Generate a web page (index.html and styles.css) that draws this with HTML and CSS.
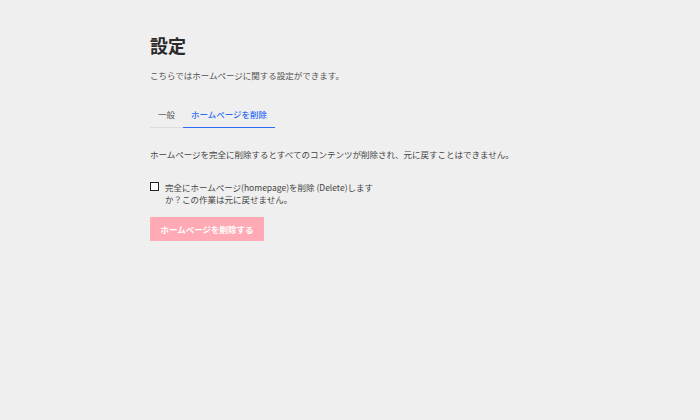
FILE: index.html
```html
<!DOCTYPE html>
<html lang="ja">
<head>
<meta charset="UTF-8" />
<title>設定</title>
<link rel="stylesheet" href="styles.css">
</head>
<body>
  <main class="settings">
    <h1>設定</h1>
    <p class="lead">こちらではホームページに関する設定ができます。</p>

    <ul class="tabs">
      <li class="tab">一般</li>
      <li class="tab active">ホームページを削除</li>
    </ul>

    <p class="note">ホームページを完全に削除するとすべてのコンテンツが削除され、元に戻すことはできません。</p>

    <label class="confirm">
      <input type="checkbox">
      <span>完全にホームページ(homepage)を削除 (Delete)しますか？この作業は元に戻せません。</span>
    </label>

    <button class="btn-delete" disabled>ホームページを削除する</button>
  </main>
</body>
</html>
```

FILE: styles.css
```css
* {
  box-sizing: border-box;
}
body {
  margin: 0;
  background-color: #efefef;
  color: #333;
  font-family: "Noto Sans CJK JP", "Noto Sans", sans-serif;
  min-height: 100vh;
}
.settings {
  padding: 33px 0 0 150px;
}
h1 {
  margin: 0;
  font-size: 18px;
  font-weight: bold;
  line-height: 24px;
  color: #2a2a2a;
}
.lead {
  margin: 11px 0 0;
  font-size: 8.5px;
  line-height: 14px;
  color: #555;
}
.tabs {
  list-style: none;
  margin: 25px 0 0;
  padding: 0;
  display: flex;
}
.tab {
  font-size: 8.5px;
  line-height: 14px;
  padding: 0 8px 6px;
  color: #555;
  white-space: nowrap;
  border-bottom: 1px solid #ddd;
}
.tab.active {
  color: #2f6cf6;
  font-weight: 500;
  border-bottom-color: #2f6cf6;
}
.note {
  margin: 19px 0 0;
  font-size: 8.5px;
  line-height: 14px;
  color: #444;
}
.confirm {
  display: flex;
  align-items: flex-start;
  gap: 6px;
  margin-top: 20px;
  width: 228px;
  font-size: 8.5px;
  line-height: 12px;
  color: #444;
}
.confirm input {
  appearance: none;
  margin: 1px 0 0;
  width: 9px;
  height: 9px;
  border: 1.5px solid #222;
  background: #fff;
  flex-shrink: 0;
}
.btn-delete {
  margin-top: 12px;
  width: 114px;
  height: 24px;
  border: none;
  background-color: #ffaab4;
  color: #fff;
  font-family: inherit;
  font-size: 8.5px;
  font-weight: bold;
}
```
